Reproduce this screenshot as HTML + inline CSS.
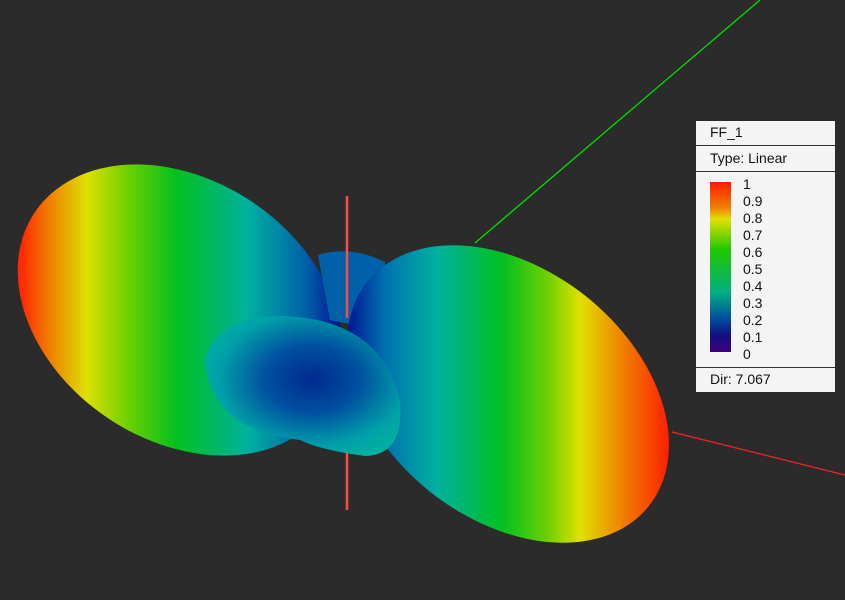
<!DOCTYPE html>
<html><head><style>
body{margin:0;width:845px;height:600px;background:#2b2b2b;overflow:hidden;font-family:"Liberation Sans",sans-serif;}
#leg{position:absolute;left:696px;top:121px;width:139px;height:271px;background:#f4f4f4;color:#111;font-size:14px;}
.row{position:absolute;left:0;width:139px;}
.hr{position:absolute;left:0;width:139px;height:1px;background:#333;}
.lab{position:absolute;left:47px;font-size:14px;line-height:14px;}
</style></head><body>
<svg width="845" height="600" style="position:absolute;left:0;top:0">
<defs>
<linearGradient id="gl" gradientUnits="userSpaceOnUse" x1="22" y1="0" x2="345" y2="0">
<stop offset="0" stop-color="#ff2a00"/><stop offset="0.08" stop-color="#f07a00"/><stop offset="0.2" stop-color="#dde000"/><stop offset="0.33" stop-color="#6cd000"/><stop offset="0.48" stop-color="#00c020"/><stop offset="0.7" stop-color="#00b0a0"/><stop offset="0.88" stop-color="#0060a8"/><stop offset="1" stop-color="#000a90"/>
</linearGradient>
<linearGradient id="gr" gradientUnits="userSpaceOnUse" x1="345" y1="0" x2="672" y2="0">
<stop offset="0" stop-color="#001090"/><stop offset="0.12" stop-color="#0070b0"/><stop offset="0.28" stop-color="#00b0a0"/><stop offset="0.48" stop-color="#00c020"/><stop offset="0.62" stop-color="#70d000"/><stop offset="0.72" stop-color="#e0e000"/><stop offset="0.85" stop-color="#f08000"/><stop offset="1" stop-color="#ff1800"/>
</linearGradient>
<radialGradient id="gm" cx="0.55" cy="0.45" r="0.6">
<stop offset="0" stop-color="#002a90"/><stop offset="0.4" stop-color="#0050a0"/><stop offset="0.8" stop-color="#00a0a8"/><stop offset="1" stop-color="#00b0a0"/>
</radialGradient>
<clipPath id="cl"><ellipse cx="180" cy="310" rx="175" ry="130" transform="rotate(34 180 310)"/></clipPath>
<clipPath id="cr"><ellipse cx="508" cy="394" rx="180" ry="125" transform="rotate(38.5 508 394)"/></clipPath>
</defs>
<line x1="475" y1="243" x2="760" y2="0" stroke="#00e000" stroke-width="1.3"/>
<line x1="672" y1="432" x2="845" y2="475" stroke="#ff2020" stroke-width="1.3"/>
<rect x="0" y="100" width="400" height="420" fill="url(#gl)" clip-path="url(#cl)"/>
<path d="M318,255 Q350,245 385,262 L380,330 L330,320 Z" fill="#0060a8"/>
<rect x="300" y="200" width="420" height="400" fill="url(#gr)" clip-path="url(#cr)"/>
<path d="M205,360 Q215,318 280,316 Q380,318 400,400 Q405,455 365,456 Q320,450 300,440 Q210,430 205,360 Z" fill="url(#gm)"/>
<line x1="347" y1="196" x2="347" y2="318" stroke="#ff4a4a" stroke-width="2.5"/>
<line x1="347" y1="453" x2="347" y2="510" stroke="#ff4a4a" stroke-width="2.5"/>
</svg>
<div id="leg">
<div class="row" style="top:3px;left:14px">FF_1</div>
<div class="hr" style="top:24px"></div>
<div class="row" style="top:29px;left:14px">Type: Linear</div>
<div class="hr" style="top:50px"></div>
<div style="position:absolute;left:14px;top:61px;width:21px;height:170px;background:linear-gradient(#ff1a00,#f08000 15%,#e0e000 22%,#20c800 40%,#00b080 65%,#0050a0 80%,#101080 90%,#400080)"></div>
<div class="lab" style="top:56px">1</div>
<div class="lab" style="top:73px">0.9</div>
<div class="lab" style="top:90px">0.8</div>
<div class="lab" style="top:107px">0.7</div>
<div class="lab" style="top:124px">0.6</div>
<div class="lab" style="top:141px">0.5</div>
<div class="lab" style="top:158px">0.4</div>
<div class="lab" style="top:175px">0.3</div>
<div class="lab" style="top:192px">0.2</div>
<div class="lab" style="top:209px">0.1</div>
<div class="lab" style="top:226px">0</div>
<div class="hr" style="top:246px"></div>
<div class="row" style="top:250px;left:14px">Dir: 7.067</div>
</div>
</body></html>
